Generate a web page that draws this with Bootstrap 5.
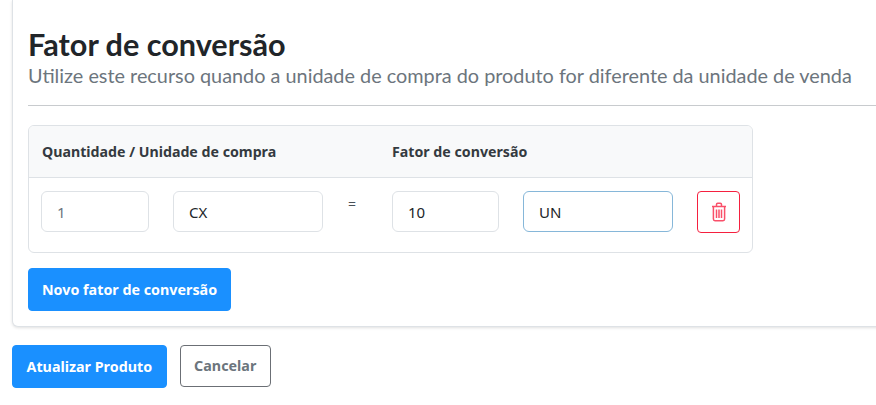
<!DOCTYPE html>
<html lang="pt-BR">
<head>
  <meta charset="UTF-8">
  <meta name="viewport" content="width=device-width, initial-scale=1.0">
  <title>Fator de conversão</title>
  <link href="https://cdn.jsdelivr.net/npm/bootstrap@5.3.0/dist/css/bootstrap.min.css" rel="stylesheet">
  <style>
    body {
      background: #fff;
      overflow: hidden;
      font-family: "Noto Sans", "Open Sans", sans-serif;
      color: #212529;
    }
    .page-wrap {
      padding-left: 12px;
      width: 900px;
    }
    .main-panel {
      border: 1px solid #dee2e6;
      border-top: 0;
      border-radius: 0 0 6px 6px;
      box-shadow: 0 1px 3px rgba(0, 0, 0, .12);
      padding: 26px 15px 15px;
      height: 327px;
    }
    .panel-title {
      font-family: Lato, sans-serif;
      font-weight: 700;
      font-size: 30.6px;
      line-height: 37px;
      margin: 0;
    }
    .panel-sub {
      font-family: Lato, sans-serif;
      font-size: 19.85px;
      line-height: 24px;
      color: #6c757d;
      margin: 0;
    }
    .panel-rule {
      margin: 18px 0 19px;
      border-color: #c8cbce;
      opacity: 1;
    }
    .factor-box {
      width: 725px;
      border: 1px solid #dee2e6;
      border-radius: 6px;
      overflow: hidden;
    }
    .factor-head {
      height: 52px;
      background: #f8f9fa;
      border-bottom: 1px solid #dee2e6;
      padding: 0 13px;
      font-size: 14.2px;
      font-weight: 700;
      color: #343a40;
    }
    .head-left { width: 350px; }
    .factor-row {
      height: 74px;
      padding: 13px 12px 0;
      gap: 24px;
    }
    .factor-input {
      height: 41px;
      padding: 0 15px;
      font-size: 15px;
      color: #212529;
      border-color: #dee2e6;
    }
    .qty-input { color: #6c757d; }
    .w-qty { width: 108px; flex: none; }
    .w-qty-b { width: 107px; flex: none; }
    .w-unit { width: 150px; flex: none; }
    .w-eq {
      width: 21px;
      flex: none;
      text-align: left;
      font-size: 14px;
      line-height: 22px;
      padding: 2px 0 0 1px;
      color: #495057;
    }
    .unit-focus { border-color: #86b7d9; }
    .trash-btn {
      width: 43px;
      height: 42px;
      padding: 0;
      border: 1px solid #f5203f;
      border-radius: 4px;
      background: #fff;
    }
    .btn-brand {
      background: #1a90ff;
      border-color: #1a90ff;
      color: #fff;
      font-size: 14.3px;
      font-weight: 700;
      height: 43px;
      padding: 0 13.5px;
      border-radius: 4px;
    }
    .btn-new {
      margin-top: 15px;
      padding: 0 13px;
    }
    .btn-cancel {
      height: 42px;
      padding: 0 13.5px;
      font-size: 14.3px;
      font-weight: 700;
      color: #6c757d;
      border: 1px solid #6b6f75;
      border-radius: 4px;
      background: #fff;
    }
    .form-actions {
      margin-top: 18px;
      gap: 13px;
    }
  </style>
</head>
<body>

<div class="page-wrap">
  <div class="main-panel bg-white">
    <h2 class="panel-title">Fator de conversão</h2>
    <p class="panel-sub">Utilize este recurso quando a unidade de compra do produto for diferente da unidade de venda</p>
    <hr class="panel-rule">

    <div class="factor-box">
      <div class="factor-head d-flex align-items-center">
        <div class="head-left">Quantidade / Unidade de compra</div>
        <div>Fator de conversão</div>
      </div>
      <div class="factor-row d-flex align-items-start">
        <input class="form-control factor-input qty-input w-qty" type="text" value="1">
        <input class="form-control factor-input w-unit" type="text" value="CX">
        <div class="w-eq">=</div>
        <input class="form-control factor-input w-qty-b" type="text" value="10">
        <input class="form-control factor-input unit-focus w-unit" type="text" value="UN">
        <button class="trash-btn d-flex align-items-center justify-content-center" type="button" aria-label="Excluir">
          <svg width="16" height="20" viewBox="0 0 16 20" fill="none" stroke="#f9506a" stroke-width="1.5">
            <path d="M1 4.5h14"/>
            <path d="M5.5 4.5V2.5a1.2 1.2 0 0 1 1.2-1.2h2.6a1.2 1.2 0 0 1 1.2 1.2v2"/>
            <path d="M2.4 4.5v12.6a1.6 1.6 0 0 0 1.6 1.6h8a1.6 1.6 0 0 0 1.6-1.6V4.5"/>
            <path d="M5.5 7.5v8.5M8 7.5v8.5M10.5 7.5v8.5"/>
          </svg>
        </button>
      </div>
    </div>

    <button class="btn btn-brand btn-new" type="button">Novo fator de conversão</button>
  </div>

  <div class="form-actions d-flex">
    <button class="btn btn-brand" type="button">Atualizar Produto</button>
    <button class="btn btn-cancel" type="button">Cancelar</button>
  </div>
</div>

</body>
</html>
